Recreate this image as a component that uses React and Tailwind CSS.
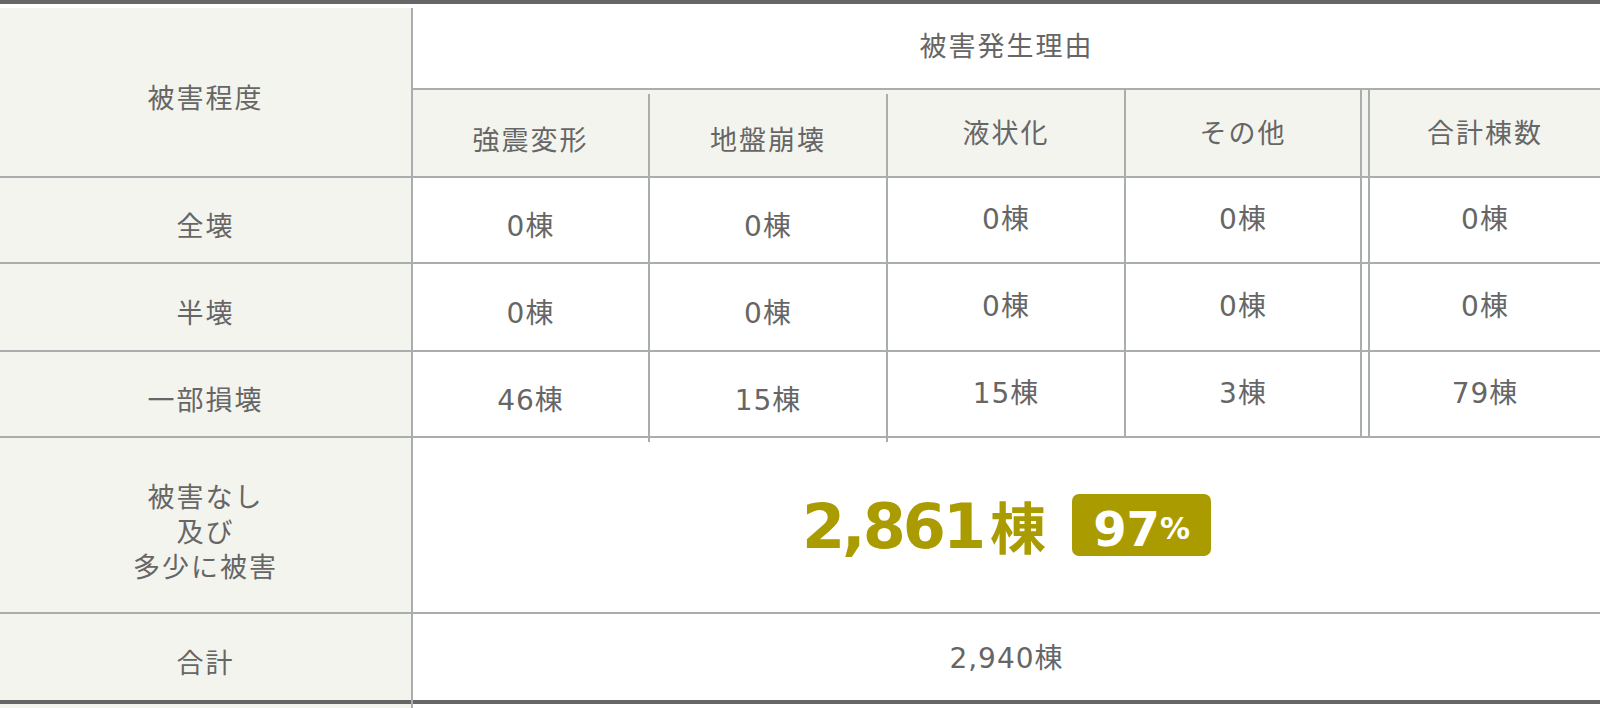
export default function App() {
  const rows = [
    { label: "全壊", vals: ["0棟", "0棟", "0棟", "0棟", "0棟"], h: "h-[86px]" },
    { label: "半壊", vals: ["0棟", "0棟", "0棟", "0棟", "0棟"], h: "h-[88px]" },
    { label: "一部損壊", vals: ["46棟", "15棟", "15棟", "3棟", "79棟"], h: "h-[86px]" },
  ];
  const num = "font-['DejaVu_Sans','Noto_Sans_CJK_JP',sans-serif] text-[28px] tracking-[1px]";
  return (
    <div className="w-[1600px] h-[708px] overflow-hidden bg-white text-[#666] font-['Noto_Sans_CJK_JP',sans-serif] text-[27px] tracking-[2px] leading-[40px]">
      <div className="h-[4px] bg-[#666]" />
      <div className="h-[4px]" />

      {/* header */}
      <div className="flex h-[170px] border-b-2 border-[#aaadad]">
        <div className="w-[413px] shrink-0 bg-[#f4f4ee] border-r-2 border-[#aaadad] flex items-center justify-center pt-[10px]">
          被害程度
        </div>
        <div className="flex-1 flex flex-col">
          <div className="h-[82px] border-b-2 border-[#aaadad] flex items-center justify-center pb-[7px]">
            被害発生理由
          </div>
          <div className="flex-1 flex bg-[#f4f4ee]">
            <div className="w-[237px] shrink-0 pt-[4px]">
              <div className="h-full border-r-2 border-[#aaadad] flex items-center justify-center pt-[8px]">強震変形</div>
            </div>
            <div className="w-[238px] shrink-0 pt-[4px]">
              <div className="h-full border-r-2 border-[#aaadad] flex items-center justify-center pt-[8px]">地盤崩壊</div>
            </div>
            <div className="w-[238px] shrink-0 border-r-2 border-[#aaadad] flex items-center justify-center pb-[2px]">液状化</div>
            <div className="w-[236px] shrink-0 border-r-2 border-[#aaadad] flex items-center justify-center pb-[2px]">その他</div>
            <div className="flex-1 ml-[6px] border-l-2 border-[#aaadad] flex items-center justify-center pb-[2px]">合計棟数</div>
          </div>
        </div>
      </div>

      {/* data rows */}
      {rows.map((r) => (
        <div key={r.label} className={`flex ${r.h} border-b-2 border-[#aaadad]`}>
          <div className="w-[413px] shrink-0 bg-[#f4f4ee] border-r-2 border-[#aaadad] flex items-center justify-center pt-[10px]">
            {r.label}
          </div>
          <div className={`flex-1 flex ${num}`}>
            <div className="w-[237px] shrink-0 border-r-2 border-[#aaadad] flex items-center justify-center pt-[14px]">{r.vals[0]}</div>
            <div className="w-[238px] shrink-0 border-r-2 border-[#aaadad] flex items-center justify-center pt-[14px]">{r.vals[1]}</div>
            <div className="w-[238px] shrink-0 border-r-2 border-[#aaadad] flex items-center justify-center pb-[1px]">{r.vals[2]}</div>
            <div className="w-[236px] shrink-0 border-r-2 border-[#aaadad] flex items-center justify-center pb-[1px]">{r.vals[3]}</div>
            <div className="flex-1 ml-[6px] border-l-2 border-[#aaadad] flex items-center justify-center pb-[1px]">{r.vals[4]}</div>
          </div>
        </div>
      ))}

      {/* 被害なし */}
      <div className="flex h-[176px] border-b-2 border-[#aaadad]">
        <div className="w-[413px] shrink-0 bg-[#f4f4ee] border-r-2 border-[#aaadad] flex flex-col items-center justify-center pt-[11px] leading-[35px]">
          <span>被害なし</span>
          <span>及び</span>
          <span>多少に被害</span>
        </div>
        <div className="flex-1 flex flex-col">
          <div className="h-[4px] flex">
            <div className="w-[237px] shrink-0 border-r-2 border-[#aaadad]" />
            <div className="w-[238px] shrink-0 border-r-2 border-[#aaadad]" />
          </div>
          <div className="flex-1 flex items-center justify-center pb-[4px] tracking-normal">
            <div className="flex items-center text-[#aa9b00] font-bold">
              <span className="font-['DejaVu_Sans',sans-serif] text-[62px] leading-none tracking-[-3px] mt-[4px]">2,861</span>
              <span className="font-['Noto_Sans_CJK_JP',sans-serif] text-[56px] leading-none ml-[7px]">棟</span>
            </div>
            <div className="ml-[26px] h-[62px] w-[139px] rounded-[7px] bg-[#aa9b00] text-white font-bold flex items-center justify-center pt-[7px] font-['DejaVu_Sans',sans-serif]">
              <span className="text-[48px] leading-none">97</span>
              <span className="text-[30px] leading-none">%</span>
            </div>
          </div>
        </div>
      </div>

      {/* 合計 */}
      <div className="flex h-[86px]">
        <div className="w-[413px] shrink-0 bg-[#f4f4ee] border-r-2 border-[#aaadad] flex items-center justify-center pt-[9px]">
          合計
        </div>
        <div className={`flex-1 flex items-center justify-center pt-[3px] ${num}`}>2,940棟</div>
      </div>

      <div className="flex h-[4px]">
        <div className="w-[413px] shrink-0 bg-[#666] border-r-2 border-[#aaadad]" />
        <div className="flex-1 bg-[#666]" />
      </div>
      <div className="flex h-[4px]">
        <div className="w-[413px] shrink-0 bg-[#f4f4ee] border-r-2 border-[#aaadad]" />
        <div className="flex-1" />
      </div>
    </div>
  );
}
